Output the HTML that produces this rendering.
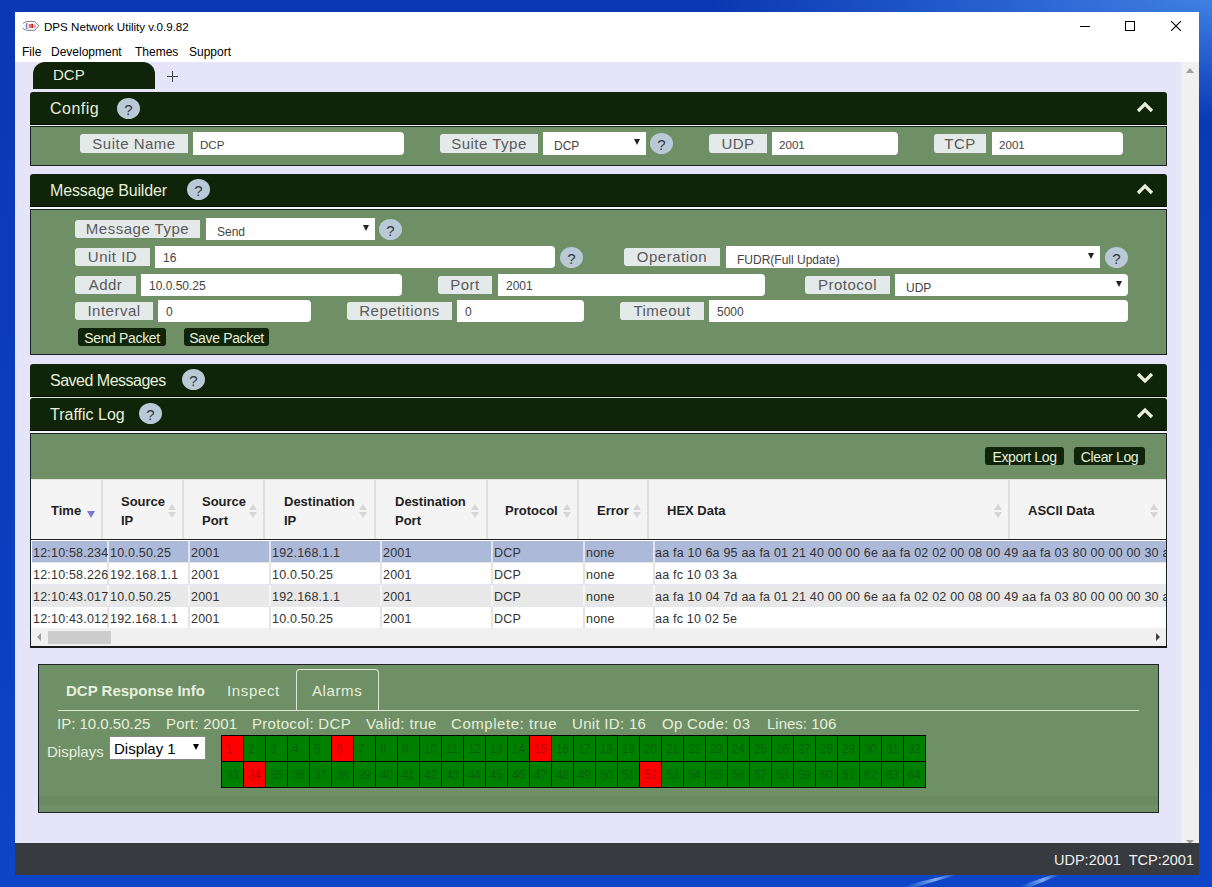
<!DOCTYPE html>
<html><head><meta charset="utf-8">
<style>
*{box-sizing:border-box;margin:0;padding:0}
html,body{width:1212px;height:887px;overflow:hidden}
body{position:relative;font-family:"Liberation Sans",sans-serif;background:radial-gradient(ellipse 500px 120px at 1212px 0px,#3f80e4 0%,rgba(40,100,220,0) 100%),linear-gradient(180deg,#0a38b4 0%,#0c3ebe 60%,#0e44c6 100%)}
.a{position:absolute}
#win{left:15px;top:12px;width:1184px;height:863px;background:#fff}
#content{left:15px;top:62px;width:1166px;height:781px;background:#e6e4f8}
#vscroll{left:1181px;top:62px;width:18px;height:781px;background:#f0f0f0}
#status{left:15px;top:843px;width:1184px;height:32px;background:#373a3e;color:#f0f0f0}
.tt{position:absolute;font-size:12px;color:#000;white-space:nowrap;line-height:14px}
.hdr{position:absolute;left:30px;width:1137px;height:33px;background:#10240a;border-radius:3px 3px 0 0;color:#e6f0dc;border-bottom:1px solid #020a00}
.hdr .t{position:absolute;left:20px;top:0;font-size:16px;line-height:33px;white-space:nowrap}
.q{position:absolute;width:23px;height:21px;border-radius:50%;background:#b9c9d6;color:#2e3844;text-align:center;font-size:15px;line-height:23px}
.body{position:absolute;left:30px;width:1137px;background:#6f8f67;border:1px solid #1a2226}
.lbl{position:absolute;background:#e4e9ea;color:#5a5a5a;letter-spacing:0.5px;border-radius:3px 0 0 3px;font-size:15px;text-align:center;white-space:nowrap;height:18px;line-height:18px}
.inp{position:absolute;background:#fff;color:#444;border-radius:0 4px 4px 0;font-size:12px;white-space:nowrap;height:22px;line-height:22px;padding-left:8px;padding-top:1px}
.sel{position:absolute;background:#fff;color:#444;font-size:12px;white-space:nowrap;height:22px;line-height:22px;padding-left:11px;padding-top:3px}
.sel .ar{position:absolute;right:6px;top:7px;width:0;height:0;border-left:3px solid transparent;border-right:3px solid transparent;border-top:6px solid #222}
.chev{position:absolute;left:1136px;width:18px;height:12px}
.btn{position:absolute;background:#10240a;color:#e6f0dc;border-radius:3px;font-size:14px;letter-spacing:-0.35px;text-align:center;line-height:18px;height:18px;padding-top:1px;white-space:nowrap}
.th{position:absolute;font-size:13px;font-weight:bold;color:#222;line-height:18px;padding-top:1px;white-space:nowrap}
.td{position:absolute;font-size:12.5px;letter-spacing:0.2px;color:#333;line-height:21px;padding-top:2px;white-space:nowrap;overflow:hidden}
.srt{position:absolute;width:8px;height:14px}
.srt:before,.srt:after{content:"";position:absolute;left:0;width:0;height:0;border-left:4px solid transparent;border-right:4px solid transparent}
.srt:before{top:0;border-bottom:6px solid #d6d6d6}.srt:after{top:8px;border-top:6px solid #d6d6d6}
.bt{position:absolute;font-size:15px;color:#e6f0dc;line-height:18px;white-space:nowrap}
.gc{position:absolute;width:21px;height:25px;font-size:12px;line-height:25px;color:rgba(30,30,30,0.36);padding-left:4px;padding-top:1px;overflow:hidden;letter-spacing:-0.3px}
</style></head><body>
<svg class="a" style="left:880px;top:875px" width="260" height="12" viewBox="0 0 260 12"><defs><linearGradient id="sg" x1="0" x2="1"><stop offset="0" stop-color="#6aa8ff" stop-opacity="0"/><stop offset="0.6" stop-color="#9cc8ff" stop-opacity="0.8"/><stop offset="1" stop-color="#6aa8ff" stop-opacity="0"/></linearGradient></defs><path d="M22 12 Q45 5 68 0 L78 0 Q55 6 36 12Z" fill="url(#sg)"/><path d="M138 12 Q155 5 172 0 L180 0 Q165 6 150 12Z" fill="url(#sg)"/></svg>
<div id="win" class="a"></div>
<!-- title bar -->
<svg class="a" style="left:20px;top:18px" width="22" height="16" viewBox="0 0 22 16"><path d="M3 5.3 L6.5 3.4 H14.6 L18.8 7.8 L14.6 12.3 H6.5 L3 10.4" stroke="#6a6a80" stroke-width="0.9" fill="#fff"/><path d="M7 5 Q5.6 7.8 7 11" stroke="#7a78c8" stroke-width="1.5" fill="none"/><rect x="8.6" y="5.9" width="3" height="4" fill="#e87070"/><rect x="11.4" y="5.9" width="1.6" height="4" fill="#b02828"/><rect x="13.2" y="6.5" width="2.6" height="3.4" fill="#e89aa8"/></svg>
<div class="tt" style="left:44px;top:20px;font-size:11.6px">DPS Network Utility v.0.9.82</div>
<div class="tt" style="left:22px;top:45px">File</div>
<div class="tt" style="left:51px;top:45px">Development</div>
<div class="tt" style="left:135px;top:45px">Themes</div>
<div class="tt" style="left:189px;top:45px">Support</div>
<div class="a" style="left:1080px;top:26px;width:10px;height:1px;background:#000"></div>
<div class="a" style="left:1125px;top:21px;width:10px;height:10px;border:1px solid #000"></div>
<svg class="a" style="left:1171px;top:21px" width="10" height="10" viewBox="0 0 10 10"><path d="M0 0 L10 10 M10 0 L0 10" stroke="#000" stroke-width="1.1"/></svg>

<div id="content" class="a"></div>
<div id="vscroll" class="a"></div>
<div class="a" style="left:1186px;top:68px;width:0;height:0;border-left:4px solid transparent;border-right:4px solid transparent;border-bottom:5px solid #a0a0a0"></div>
<div class="a" style="left:1186px;top:840px;width:0;height:0;border-left:4px solid transparent;border-right:4px solid transparent;border-top:4px solid #a0a0a0"></div>

<!-- tab -->
<div class="a" style="left:33px;top:62px;width:122px;height:27px;background:#10240a;border-radius:12px 12px 0 0"></div>
<div class="tt" style="left:53px;top:66px;font-size:15px;line-height:17px;color:#e6f0dc">DCP</div>
<div class="a" style="left:167px;top:76px;width:11px;height:1.4px;background:#444"></div>
<div class="a" style="left:172px;top:71px;width:1.4px;height:11px;background:#444"></div>

<!-- Config -->
<div class="hdr" style="top:92px"><div class="t" style="letter-spacing:0.5px">Config</div></div>
<div class="q" style="left:117px;top:98px">?</div>
<svg class="chev" style="top:101px" viewBox="0 0 18 12"><path d="M2 10 L9 3 L16 10" stroke="#e6f0dc" stroke-width="3.2" fill="none"/></svg>
<div class="a" style="left:30px;top:125px;width:1137px;height:1px;background:#eef2f0"></div>
<div class="body" style="top:126px;height:40px"></div>
<div class="lbl" style="left:80px;top:134px;width:108px;height:19px;line-height:19px">Suite Name</div>
<div class="inp" style="left:193px;top:132px;width:211px;height:23px;line-height:23px;padding-top:1px;padding-left:7px;font-size:11.6px">DCP</div>
<div class="lbl" style="left:440px;top:134px;width:98px;height:19px;line-height:19px">Suite Type</div>
<div class="sel" style="left:543px;top:132px;width:103px;height:23px;line-height:23px">DCP<div class="ar"></div></div>
<div class="q" style="left:650px;top:133px">?</div>
<div class="lbl" style="left:709px;top:134px;width:58px;height:19px;line-height:19px">UDP</div>
<div class="inp" style="left:772px;top:132px;width:126px;height:23px;line-height:23px;padding-top:1px;padding-left:7px;font-size:11.6px">2001</div>
<div class="lbl" style="left:934px;top:134px;width:52px;height:19px;line-height:19px">TCP</div>
<div class="inp" style="left:992px;top:132px;width:131px;height:23px;line-height:23px;padding-top:1px;padding-left:7px;font-size:11.6px">2001</div>

<!-- Message Builder -->
<div class="hdr" style="top:174px"><div class="t" style="letter-spacing:-0.15px">Message Builder</div></div>
<div class="q" style="left:187px;top:179px">?</div>
<svg class="chev" style="top:183px" viewBox="0 0 18 12"><path d="M2 10 L9 3 L16 10" stroke="#e6f0dc" stroke-width="3.2" fill="none"/></svg>
<div class="a" style="left:30px;top:207px;width:1137px;height:2px;background:#f4f6fa"></div>
<div class="body" style="top:209px;height:146px"></div>

<div class="lbl" style="left:75px;top:220px;width:125px">Message Type</div>
<div class="sel" style="left:206px;top:218px;width:169px">Send<div class="ar"></div></div>
<div class="q" style="left:379px;top:219px">?</div>

<div class="lbl" style="left:75px;top:248px;width:75px">Unit ID</div>
<div class="inp" style="left:155px;top:246px;width:400px">16</div>
<div class="q" style="left:560px;top:247px">?</div>
<div class="lbl" style="left:624px;top:248px;width:96px">Operation</div>
<div class="sel" style="left:726px;top:246px;width:374px">FUDR(Full Update)<div class="ar"></div></div>
<div class="q" style="left:1105px;top:247px">?</div>

<div class="lbl" style="left:75px;top:276px;width:61px">Addr</div>
<div class="inp" style="left:141px;top:274px;width:261px">10.0.50.25</div>
<div class="lbl" style="left:438px;top:276px;width:54px">Port</div>
<div class="inp" style="left:498px;top:274px;width:267px">2001</div>
<div class="lbl" style="left:805px;top:276px;width:85px">Protocol</div>
<div class="sel" style="left:895px;top:274px;width:233px;border-radius:0 4px 4px 0">UDP<div class="ar"></div></div>

<div class="lbl" style="left:75px;top:302px;width:78px">Interval</div>
<div class="inp" style="left:158px;top:300px;width:153px">0</div>
<div class="lbl" style="left:347px;top:302px;width:105px">Repetitions</div>
<div class="inp" style="left:457px;top:300px;width:127px">0</div>
<div class="lbl" style="left:620px;top:302px;width:84px">Timeout</div>
<div class="inp" style="left:709px;top:300px;width:419px">5000</div>

<div class="btn" style="left:78px;top:328px;width:88px">Send Packet</div>
<div class="btn" style="left:184px;top:328px;width:85px">Save Packet</div>

<!-- Saved Messages -->
<div class="hdr" style="top:364px"><div class="t" style="letter-spacing:-0.5px">Saved Messages</div></div>
<div class="q" style="left:182px;top:369px">?</div>
<svg class="chev" style="top:372px" viewBox="0 0 18 12"><path d="M2 2 L9 9 L16 2" stroke="#e6f0dc" stroke-width="3.2" fill="none"/></svg>
<div class="a" style="left:30px;top:397px;width:1137px;height:1px;background:#d8e6d4"></div>

<!-- Traffic Log -->
<div class="hdr" style="top:398px"><div class="t">Traffic Log</div></div>
<div class="q" style="left:139px;top:403px">?</div>
<svg class="chev" style="top:407px" viewBox="0 0 18 12"><path d="M2 10 L9 3 L16 10" stroke="#e6f0dc" stroke-width="3.2" fill="none"/></svg>
<div class="a" style="left:30px;top:431px;width:1137px;height:2px;background:#f4f6fa"></div>
<div class="body" style="top:433px;height:214px"></div>
<div class="btn" style="left:985px;top:447px;width:79px">Export Log</div>
<div class="btn" style="left:1074px;top:447px;width:71px">Clear Log</div>

<!-- table -->
<div class="a" style="left:31px;top:479px;width:1135px;height:1px;background:#dfe6da"></div>
<div class="a" style="left:31px;top:480px;width:1135px;height:59px;background:#f4f4f4"></div>
<div class="a" style="left:101px;top:480px;width:2px;height:59px;background:#dedede"></div>
<div class="a" style="left:182px;top:480px;width:2px;height:59px;background:#dedede"></div>
<div class="a" style="left:263px;top:480px;width:2px;height:59px;background:#dedede"></div>
<div class="a" style="left:374px;top:480px;width:2px;height:59px;background:#dedede"></div>
<div class="a" style="left:486px;top:480px;width:2px;height:59px;background:#dedede"></div>
<div class="a" style="left:577px;top:480px;width:2px;height:59px;background:#dedede"></div>
<div class="a" style="left:647px;top:480px;width:2px;height:59px;background:#dedede"></div>
<div class="a" style="left:1008px;top:480px;width:2px;height:59px;background:#dedede"></div>
<div class="a" style="left:31px;top:539px;width:1135px;height:1px;background:#1e1e1e"></div>
<div class="a" style="left:31px;top:540px;width:1135px;height:88px;background:#fff"></div>
<div class="th" style="left:51px;top:501px">Time</div>
<div class="th" style="left:121px;top:492px">Source</div>
<div class="th" style="left:121px;top:511px">IP</div>
<div class="th" style="left:202px;top:492px">Source</div>
<div class="th" style="left:202px;top:511px">Port</div>
<div class="th" style="left:284px;top:492px">Destination</div>
<div class="th" style="left:284px;top:511px">IP</div>
<div class="th" style="left:395px;top:492px">Destination</div>
<div class="th" style="left:395px;top:511px">Port</div>
<div class="th" style="left:505px;top:501px">Protocol</div>
<div class="th" style="left:597px;top:501px">Error</div>
<div class="th" style="left:667px;top:501px">HEX Data</div>
<div class="th" style="left:1028px;top:501px">ASCII Data</div>
<div class="a" style="left:87px;top:511px;width:0;height:0;border-left:4.5px solid transparent;border-right:4.5px solid transparent;border-top:7px solid #7b78d0"></div>
<div class="srt" style="left:168px;top:504px"></div>
<div class="srt" style="left:249px;top:504px"></div>
<div class="srt" style="left:359px;top:504px"></div>
<div class="srt" style="left:471px;top:504px"></div>
<div class="srt" style="left:563px;top:504px"></div>
<div class="srt" style="left:633px;top:504px"></div>
<div class="srt" style="left:994px;top:504px"></div>
<div class="srt" style="left:1150px;top:504px"></div>
<div class="a" style="left:32px;top:541px;width:1134px;height:21px;background:#adb9d8"></div>
<div class="a" style="left:107px;top:541px;width:2px;height:21px;background:#dfe6f0"></div>
<div class="a" style="left:188px;top:541px;width:2px;height:21px;background:#dfe6f0"></div>
<div class="a" style="left:269px;top:541px;width:2px;height:21px;background:#dfe6f0"></div>
<div class="a" style="left:380px;top:541px;width:2px;height:21px;background:#dfe6f0"></div>
<div class="a" style="left:491px;top:541px;width:2px;height:21px;background:#dfe6f0"></div>
<div class="a" style="left:583px;top:541px;width:2px;height:21px;background:#dfe6f0"></div>
<div class="a" style="left:653px;top:541px;width:2px;height:21px;background:#dfe6f0"></div>
<div class="a" style="left:32px;top:562px;width:1134px;height:1px;background:#e4e8ee"></div>
<div class="td" style="left:33px;top:541px">12:10:58.234</div>
<div class="td" style="left:110px;top:541px">10.0.50.25</div>
<div class="td" style="left:191px;top:541px">2001</div>
<div class="td" style="left:272px;top:541px">192.168.1.1</div>
<div class="td" style="left:383px;top:541px">2001</div>
<div class="td" style="left:494px;top:541px">DCP</div>
<div class="td" style="left:586px;top:541px">none</div>
<div class="td" style="left:655px;top:541px;width:511px">aa fa 10 6a 95 aa fa 01 21 40 00 00 6e aa fa 02 02 00 08 00 49 aa fa 03 80 00 00 00 30 a</div>
<div class="a" style="left:32px;top:563px;width:1134px;height:21px;background:#ffffff"></div>
<div class="a" style="left:107px;top:563px;width:2px;height:21px;background:#e4e4e4"></div>
<div class="a" style="left:188px;top:563px;width:2px;height:21px;background:#e4e4e4"></div>
<div class="a" style="left:269px;top:563px;width:2px;height:21px;background:#e4e4e4"></div>
<div class="a" style="left:380px;top:563px;width:2px;height:21px;background:#e4e4e4"></div>
<div class="a" style="left:491px;top:563px;width:2px;height:21px;background:#e4e4e4"></div>
<div class="a" style="left:583px;top:563px;width:2px;height:21px;background:#e4e4e4"></div>
<div class="a" style="left:653px;top:563px;width:2px;height:21px;background:#e4e4e4"></div>
<div class="a" style="left:32px;top:584px;width:1134px;height:1px;background:#e4e8ee"></div>
<div class="td" style="left:33px;top:563px">12:10:58.226</div>
<div class="td" style="left:110px;top:563px">192.168.1.1</div>
<div class="td" style="left:191px;top:563px">2001</div>
<div class="td" style="left:272px;top:563px">10.0.50.25</div>
<div class="td" style="left:383px;top:563px">2001</div>
<div class="td" style="left:494px;top:563px">DCP</div>
<div class="td" style="left:586px;top:563px">none</div>
<div class="td" style="left:655px;top:563px">aa fc 10 03 3a</div>
<div class="a" style="left:32px;top:585px;width:1134px;height:21px;background:#e8e8e8"></div>
<div class="a" style="left:107px;top:585px;width:2px;height:21px;background:#f4f4f4"></div>
<div class="a" style="left:188px;top:585px;width:2px;height:21px;background:#f4f4f4"></div>
<div class="a" style="left:269px;top:585px;width:2px;height:21px;background:#f4f4f4"></div>
<div class="a" style="left:380px;top:585px;width:2px;height:21px;background:#f4f4f4"></div>
<div class="a" style="left:491px;top:585px;width:2px;height:21px;background:#f4f4f4"></div>
<div class="a" style="left:583px;top:585px;width:2px;height:21px;background:#f4f4f4"></div>
<div class="a" style="left:653px;top:585px;width:2px;height:21px;background:#f4f4f4"></div>
<div class="a" style="left:32px;top:606px;width:1134px;height:1px;background:#e4e8ee"></div>
<div class="td" style="left:33px;top:585px">12:10:43.017</div>
<div class="td" style="left:110px;top:585px">10.0.50.25</div>
<div class="td" style="left:191px;top:585px">2001</div>
<div class="td" style="left:272px;top:585px">192.168.1.1</div>
<div class="td" style="left:383px;top:585px">2001</div>
<div class="td" style="left:494px;top:585px">DCP</div>
<div class="td" style="left:586px;top:585px">none</div>
<div class="td" style="left:655px;top:585px;width:511px">aa fa 10 04 7d aa fa 01 21 40 00 00 6e aa fa 02 02 00 08 00 49 aa fa 03 80 00 00 00 30 a</div>
<div class="a" style="left:32px;top:607px;width:1134px;height:21px;background:#ffffff"></div>
<div class="a" style="left:107px;top:607px;width:2px;height:21px;background:#e4e4e4"></div>
<div class="a" style="left:188px;top:607px;width:2px;height:21px;background:#e4e4e4"></div>
<div class="a" style="left:269px;top:607px;width:2px;height:21px;background:#e4e4e4"></div>
<div class="a" style="left:380px;top:607px;width:2px;height:21px;background:#e4e4e4"></div>
<div class="a" style="left:491px;top:607px;width:2px;height:21px;background:#e4e4e4"></div>
<div class="a" style="left:583px;top:607px;width:2px;height:21px;background:#e4e4e4"></div>
<div class="a" style="left:653px;top:607px;width:2px;height:21px;background:#e4e4e4"></div>
<div class="a" style="left:32px;top:628px;width:1134px;height:1px;background:#e4e8ee"></div>
<div class="td" style="left:33px;top:607px">12:10:43.012</div>
<div class="td" style="left:110px;top:607px">192.168.1.1</div>
<div class="td" style="left:191px;top:607px">2001</div>
<div class="td" style="left:272px;top:607px">10.0.50.25</div>
<div class="td" style="left:383px;top:607px">2001</div>
<div class="td" style="left:494px;top:607px">DCP</div>
<div class="td" style="left:586px;top:607px">none</div>
<div class="td" style="left:655px;top:607px">aa fc 10 02 5e</div>
<div class="a" style="left:31px;top:628px;width:1135px;height:18px;background:#f0f0f0"></div>
<div class="a" style="left:30px;top:646px;width:1137px;height:2px;background:#1a1a1a"></div>
<div class="a" style="left:48px;top:631px;width:63px;height:13px;background:#cdcdcd"></div>
<div class="a" style="left:37px;top:633px;width:0;height:0;border-top:4px solid transparent;border-bottom:4px solid transparent;border-right:4px solid #a0a0a0"></div>
<div class="a" style="left:1156px;top:633px;width:0;height:0;border-top:4px solid transparent;border-bottom:4px solid transparent;border-left:4px solid #404040"></div>
<!-- bottom panel -->
<div class="a" style="left:38px;top:664px;width:1121px;height:149px;background:#6f8f67;border:1px solid #1e2628"></div>
<div class="a" style="left:39px;top:796px;width:1119px;height:9px;background:#6a8a62"></div>
<div class="a" style="left:296px;top:669px;width:83px;height:42px;border:1px solid #dce8d4;border-bottom:none;border-radius:4px 4px 0 0"></div>
<div class="a" style="left:58px;top:710px;width:1081px;height:1px;background:#dce8d4"></div>
<div class="bt" style="left:66px;top:682px;font-weight:bold">DCP Response Info</div>
<div class="bt" style="left:227px;top:682px;letter-spacing:0.65px">Inspect</div>
<div class="bt" style="left:312px;top:682px;letter-spacing:0.6px">Alarms</div>
<div class="bt" style="left:57px;top:715px">IP: 10.0.50.25</div>
<div class="bt" style="left:166px;top:715px;letter-spacing:0.22px">Port: 2001</div>
<div class="bt" style="left:252px;top:715px;letter-spacing:0.3px">Protocol: DCP</div>
<div class="bt" style="left:366px;top:715px;letter-spacing:0.4px">Valid: true</div>
<div class="bt" style="left:451px;top:715px;letter-spacing:0.55px">Complete: true</div>
<div class="bt" style="left:572px;top:715px;letter-spacing:0.3px">Unit ID: 16</div>
<div class="bt" style="left:662px;top:715px;letter-spacing:0.3px">Op Code: 03</div>
<div class="bt" style="left:767px;top:715px">Lines: 106</div>
<div class="bt" style="left:47px;top:743px">Displays</div>
<div class="a" style="left:109px;top:736px;width:97px;height:24px;background:#fff;border:1px solid #888"></div>
<div class="bt" style="left:114px;top:740px;color:#000">Display 1</div>
<div class="a" style="left:193px;top:744px;width:0;height:0;border-left:3px solid transparent;border-right:3px solid transparent;border-top:6px solid #000"></div>
<div class="a" style="left:221px;top:735px;width:705px;height:53px;background:#000"></div>
<div class="gc" style="left:222px;top:736px;background:#ff0000">1</div>
<div class="gc" style="left:244px;top:736px;background:#008000">2</div>
<div class="gc" style="left:266px;top:736px;background:#008000">3</div>
<div class="gc" style="left:288px;top:736px;background:#008000">4</div>
<div class="gc" style="left:310px;top:736px;background:#008000">5</div>
<div class="gc" style="left:332px;top:736px;background:#ff0000">6</div>
<div class="gc" style="left:354px;top:736px;background:#008000">7</div>
<div class="gc" style="left:376px;top:736px;background:#008000">8</div>
<div class="gc" style="left:398px;top:736px;background:#008000">9</div>
<div class="gc" style="left:420px;top:736px;background:#008000">10</div>
<div class="gc" style="left:442px;top:736px;background:#008000">11</div>
<div class="gc" style="left:464px;top:736px;background:#008000">12</div>
<div class="gc" style="left:486px;top:736px;background:#008000">13</div>
<div class="gc" style="left:508px;top:736px;background:#008000">14</div>
<div class="gc" style="left:530px;top:736px;background:#ff0000">15</div>
<div class="gc" style="left:552px;top:736px;background:#008000">16</div>
<div class="gc" style="left:574px;top:736px;background:#008000">17</div>
<div class="gc" style="left:596px;top:736px;background:#008000">18</div>
<div class="gc" style="left:618px;top:736px;background:#008000">19</div>
<div class="gc" style="left:640px;top:736px;background:#008000">20</div>
<div class="gc" style="left:662px;top:736px;background:#008000">21</div>
<div class="gc" style="left:684px;top:736px;background:#008000">22</div>
<div class="gc" style="left:706px;top:736px;background:#008000">23</div>
<div class="gc" style="left:728px;top:736px;background:#008000">24</div>
<div class="gc" style="left:750px;top:736px;background:#008000">25</div>
<div class="gc" style="left:772px;top:736px;background:#008000">26</div>
<div class="gc" style="left:794px;top:736px;background:#008000">27</div>
<div class="gc" style="left:816px;top:736px;background:#008000">28</div>
<div class="gc" style="left:838px;top:736px;background:#008000">29</div>
<div class="gc" style="left:860px;top:736px;background:#008000">30</div>
<div class="gc" style="left:882px;top:736px;background:#008000">31</div>
<div class="gc" style="left:904px;top:736px;background:#008000">32</div>
<div class="gc" style="left:222px;top:762px;background:#008000">33</div>
<div class="gc" style="left:244px;top:762px;background:#ff0000">34</div>
<div class="gc" style="left:266px;top:762px;background:#008000">35</div>
<div class="gc" style="left:288px;top:762px;background:#008000">36</div>
<div class="gc" style="left:310px;top:762px;background:#008000">37</div>
<div class="gc" style="left:332px;top:762px;background:#008000">38</div>
<div class="gc" style="left:354px;top:762px;background:#008000">39</div>
<div class="gc" style="left:376px;top:762px;background:#008000">40</div>
<div class="gc" style="left:398px;top:762px;background:#008000">41</div>
<div class="gc" style="left:420px;top:762px;background:#008000">42</div>
<div class="gc" style="left:442px;top:762px;background:#008000">43</div>
<div class="gc" style="left:464px;top:762px;background:#008000">44</div>
<div class="gc" style="left:486px;top:762px;background:#008000">45</div>
<div class="gc" style="left:508px;top:762px;background:#008000">46</div>
<div class="gc" style="left:530px;top:762px;background:#008000">47</div>
<div class="gc" style="left:552px;top:762px;background:#008000">48</div>
<div class="gc" style="left:574px;top:762px;background:#008000">49</div>
<div class="gc" style="left:596px;top:762px;background:#008000">50</div>
<div class="gc" style="left:618px;top:762px;background:#008000">51</div>
<div class="gc" style="left:640px;top:762px;background:#ff0000">52</div>
<div class="gc" style="left:662px;top:762px;background:#008000">53</div>
<div class="gc" style="left:684px;top:762px;background:#008000">54</div>
<div class="gc" style="left:706px;top:762px;background:#008000">55</div>
<div class="gc" style="left:728px;top:762px;background:#008000">56</div>
<div class="gc" style="left:750px;top:762px;background:#008000">57</div>
<div class="gc" style="left:772px;top:762px;background:#008000">58</div>
<div class="gc" style="left:794px;top:762px;background:#008000">59</div>
<div class="gc" style="left:816px;top:762px;background:#008000">60</div>
<div class="gc" style="left:838px;top:762px;background:#008000">61</div>
<div class="gc" style="left:860px;top:762px;background:#008000">62</div>
<div class="gc" style="left:882px;top:762px;background:#008000">63</div>
<div class="gc" style="left:904px;top:762px;background:#008000">64</div>
<div id="status" class="a"></div>
<div class="tt" style="left:1054px;top:852px;font-size:14.5px;line-height:17px;color:#f0f0f0">UDP:2001&nbsp; TCP:2001</div>
</body></html>
